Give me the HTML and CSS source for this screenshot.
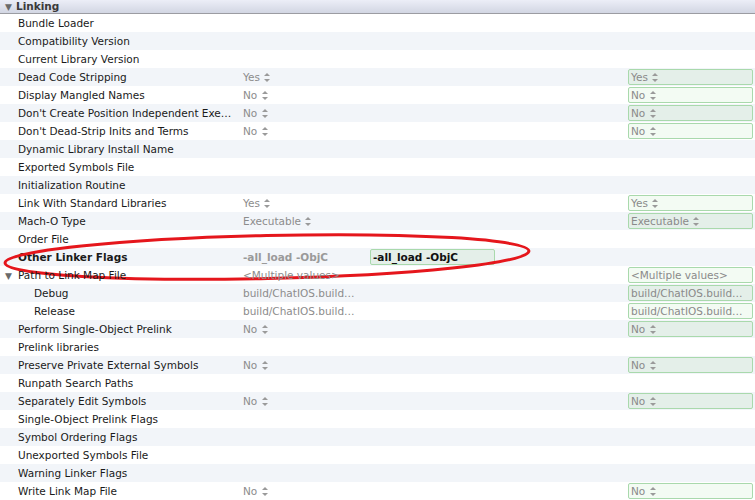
FILE: index.html
```html
<!DOCTYPE html>
<html lang="en">
<head>
  <meta charset="UTF-8">
  <title>Build Settings - Linking</title>
  <link rel="stylesheet" href="styles.css">
</head>
<body>
  <div class="settings">
    <div class="group-header"><span class="disclosure">&#9660;</span>Linking</div>

    <div class="row"><div class="name">Bundle Loader</div></div>
    <div class="row"><div class="name">Compatibility Version</div></div>
    <div class="row"><div class="name">Current Library Version</div></div>
    <div class="row">
      <div class="name">Dead Code Stripping</div>
      <div class="value">Yes <span class="stepper"></span></div>
      <div class="box">Yes <span class="stepper"></span></div>
    </div>
    <div class="row">
      <div class="name">Display Mangled Names</div>
      <div class="value">No <span class="stepper"></span></div>
      <div class="box">No <span class="stepper"></span></div>
    </div>
    <div class="row">
      <div class="name">Don't Create Position Independent Exe…</div>
      <div class="value">No <span class="stepper"></span></div>
      <div class="box">No <span class="stepper"></span></div>
    </div>
    <div class="row">
      <div class="name">Don't Dead-Strip Inits and Terms</div>
      <div class="value">No <span class="stepper"></span></div>
      <div class="box">No <span class="stepper"></span></div>
    </div>
    <div class="row"><div class="name">Dynamic Library Install Name</div></div>
    <div class="row"><div class="name">Exported Symbols File</div></div>
    <div class="row"><div class="name">Initialization Routine</div></div>
    <div class="row">
      <div class="name">Link With Standard Libraries</div>
      <div class="value">Yes <span class="stepper"></span></div>
      <div class="box">Yes <span class="stepper"></span></div>
    </div>
    <div class="row">
      <div class="name">Mach-O Type</div>
      <div class="value">Executable <span class="stepper"></span></div>
      <div class="box">Executable <span class="stepper"></span></div>
    </div>
    <div class="row"><div class="name">Order File</div></div>
    <div class="row highlighted">
      <div class="name bold">Other Linker Flags</div>
      <div class="value flags">-all_load -ObjC</div>
      <div class="box inline-box">-all_load -ObjC</div>
      <svg class="circle" width="540" height="60" viewBox="0 0 540 60">
        <ellipse cx="267" cy="30" rx="262" ry="21.5" transform="rotate(-1.3 267 30)" fill="none" stroke="#e5161c" stroke-width="3"/>
      </svg>
    </div>
    <div class="row">
      <div class="name"><span class="disclosure small">&#9660;</span>Path to Link Map File</div>
      <div class="value">&lt;Multiple values&gt;</div>
      <div class="box">&lt;Multiple values&gt;</div>
    </div>
    <div class="row">
      <div class="name sub">Debug</div>
      <div class="value">build/ChatIOS.build…</div>
      <div class="box">build/ChatIOS.build…</div>
    </div>
    <div class="row">
      <div class="name sub">Release</div>
      <div class="value">build/ChatIOS.build…</div>
      <div class="box">build/ChatIOS.build…</div>
    </div>
    <div class="row">
      <div class="name">Perform Single-Object Prelink</div>
      <div class="value">No <span class="stepper"></span></div>
      <div class="box">No <span class="stepper"></span></div>
    </div>
    <div class="row"><div class="name">Prelink libraries</div></div>
    <div class="row">
      <div class="name">Preserve Private External Symbols</div>
      <div class="value">No <span class="stepper"></span></div>
      <div class="box">No <span class="stepper"></span></div>
    </div>
    <div class="row"><div class="name">Runpath Search Paths</div></div>
    <div class="row">
      <div class="name">Separately Edit Symbols</div>
      <div class="value">No <span class="stepper"></span></div>
      <div class="box">No <span class="stepper"></span></div>
    </div>
    <div class="row"><div class="name">Single-Object Prelink Flags</div></div>
    <div class="row"><div class="name">Symbol Ordering Flags</div></div>
    <div class="row"><div class="name">Unexported Symbols File</div></div>
    <div class="row"><div class="name">Warning Linker Flags</div></div>
    <div class="row">
      <div class="name">Write Link Map File</div>
      <div class="value">No <span class="stepper"></span></div>
      <div class="box">No <span class="stepper"></span></div>
    </div>
  </div>
</body>
</html>
```

FILE: styles.css
```css
/* Base */
html, body {
  margin: 0;
  padding: 0;
}
body {
  background: #ffffff;
  font-family: 'DejaVu Sans', Verdana, sans-serif;
  font-size: 10.5px;
  color: #1a1a1a;
  overflow: hidden;
}

.settings {
  width: 755px;
}

/* Group header bar */
.group-header {
  height: 13px;
  line-height: 13px;
  background: linear-gradient(#eceef7, #d2d6e3);
  border-bottom: 1px solid #9b9ca2;
  font-weight: bold;
  color: #3a3a3a;
  padding-left: 4px;
}
.disclosure {
  display: inline-block;
  width: 9px;
  font-size: 9px;
  color: #6a6a6a;
  text-align: center;
  margin-right: 3px;
}
.disclosure.small {
  margin-left: -14px;
  margin-right: 5px;
}

/* Rows */
.row {
  position: relative;
  display: flex;
  align-items: center;
  height: 18px;
}
.row:nth-child(odd) {
  background: #f2f5f9;
}
.name {
  width: 222px;
  padding-left: 18px;
  margin-right: 3px;
  white-space: nowrap;
  overflow: hidden;
  flex-shrink: 0;
}
.name.sub {
  padding-left: 34px;
  width: 206px;
}
.name.bold {
  font-weight: bold;
}
.value {
  width: 385px;
  flex-shrink: 0;
  color: #8c8c8c;
  white-space: nowrap;
}
.value.flags {
  width: 127px;
  font-weight: bold;
  color: #9a9a9a;
}

/* Green "resolved" box on the right */
.box {
  width: 121px;
  height: 14px;
  line-height: 14px;
  padding-left: 2px;
  border: 1px solid #a9d9ac;
  border-radius: 2px;
  background: #f3fbf3;
  color: #8a8a8a;
  white-space: nowrap;
  overflow: hidden;
  flex-shrink: 0;
}
.row:nth-child(odd) .box {
  background: #e4efe9;
}
.box.inline-box {
  color: #111;
  font-weight: bold;
}

/* Up/down stepper arrows */
.stepper {
  display: inline-block;
  width: 6px;
  height: 9px;
  margin-left: 1px;
  vertical-align: -1px;
  position: relative;
}
.stepper::before, .stepper::after {
  content: "";
  position: absolute;
  left: 0;
  border-left: 3px solid transparent;
  border-right: 3px solid transparent;
}
.stepper::before {
  top: 0;
  border-bottom: 3.5px solid #9a9a9a;
}
.stepper::after {
  bottom: 0;
  border-top: 3.5px solid #9a9a9a;
}

/* Red annotation ring */
.circle {
  position: absolute;
  left: 0;
  top: -21px;
  pointer-events: none;
}
```
